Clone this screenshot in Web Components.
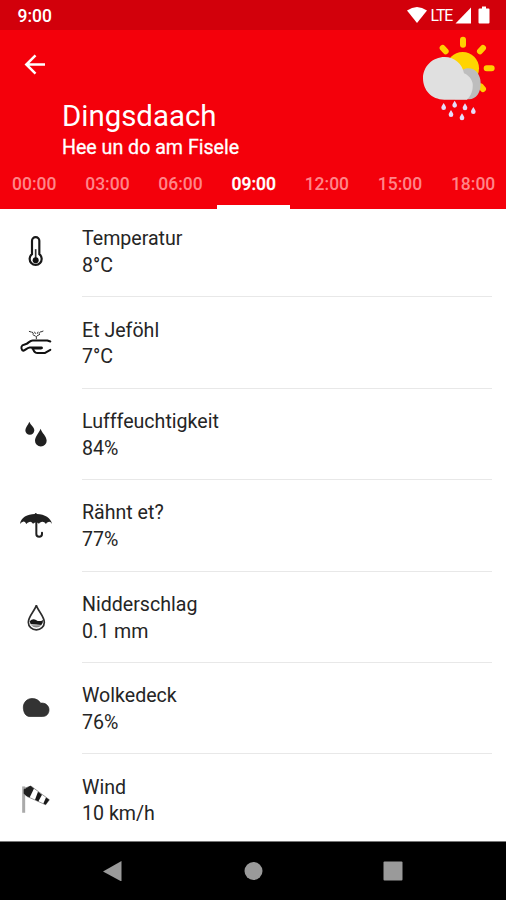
<!DOCTYPE html>
<html lang="ksh">
<head>
<meta charset="utf-8">
<title>Dingsdaach</title>
<style>
  body {
    margin: 0;
    font-family: Roboto, sans-serif;
    background: #fff;
  }
</style>
</head>
<body>
<weather-screen></weather-screen>

<script>
// Icons of the detail rows
const icons = {
  temperature: `<svg viewBox="18 14.5 120 120">
    <path d="M66 84V44a11 11 0 0 1 22 0v40a18 18 0 1 1-22 0z" fill="#fff" stroke="#181818" stroke-width="6.500"/>
    <path d="M77 69v30" stroke="#333" stroke-width="5"/>
    <circle cx="77" cy="102" r="9" fill="#111"/></svg>`,
  feeling: `<svg viewBox="18 23.7 120 120" fill="none" stroke="#111" stroke-width="6" stroke-linecap="round" stroke-linejoin="round">
    <path d="M121 79L112 76H68C60 76 56 83 50 86L37 91C32 95 34 105 40 107C46 106 50 98 59 97H95C97 99 95 100 92 100H67M69 102C73 112 76 114 83 114H104L121 104"/>
    <path d="M79 71v-7M76 63l-7-4M82 62l7-4M70 56l-3-5M88 55l3-5M64 51l-6-2M94 50l5-2M74 51l2 4M84 51l-2 4" stroke="#333" stroke-width="3"/></svg>`,
  humidity: `<svg viewBox="18 27.9 120 120" fill="#202020">
    <path d="M58 51C61 60 73 67 73 77A13.500 13.500 0 0 1 46 77C46 69 54 61 58 51z"/>
    <path d="M92 72C95 84 110 95 110 108A17.500 17.500 0 0 1 75 108C75 96 87 84 92 72z"/></svg>`,
  rain: `<svg viewBox="18 32.1 120 120">
    <path d="M30 86C32 66 53 57 74 56Q77 50 81 56C104 57 123 68 126 86Q121 77 115 80Q109 82 108 86Q102 78 94 80Q88 82 87 85Q78 76 69 85Q64 78 58 80Q52 82 49 86Q45 78 39 79Q34 80 30 86z" fill="#202020"/>
    <path d="M79 76v40a8.500 8.500 0 0 0 17 0v-4" fill="none" stroke="#202020" stroke-width="6" stroke-linecap="round"/></svg>`,
  precipitation: `<svg viewBox="18 21.3 120 120">
    <path d="M79 46C76 60 55 80 55 97a24 23 0 0 0 48 0C103 80 82 60 79 46z" fill="#fff" stroke="#2c2c2c" stroke-width="5"/>
    <path d="M59 94Q68 84 78 90Q88 97 99 90A20 20 0 0 1 94 105Q79 103 62 103z" fill="#181818"/>
    <path d="M63 106Q79 106 95 106Q79 119 63 106z" fill="#888"/></svg>`,
  clouds: `<svg viewBox="18 25.5 120 120">
    <path d="M60 111C46 111 41 98 40 86C39 68 52 57 66 57C79 57 87 63 92 71C106 69 117 78 117 91C117 104 108 111 98 111z" fill="#333" stroke="#222" stroke-width="2"/></svg>`,
  wind: `<svg viewBox="18 29.7 120 120">
    <path d="M41 49v79" stroke="#aaa" stroke-width="9"/>
    <path d="M44 54L63 48L118 89L107 104L51 79L44 70z" fill="#fff" stroke="#666" stroke-width="2"/>
    <path d="M41 58L61 47L72 55L59 82L49 78L41 70z" fill="#202020"/>
    <path d="M84 65L96 74L85 94L75 89zM108 82L118 89L107 104L100 100z" fill="#181818"/></svg>`
};

const details = [
  ['temperature', 'Temperatur', '8°C'],
  ['feeling', 'Et Jeföhl', '7°C'],
  ['humidity', 'Lufffeuchtigkeit', '84%'],
  ['rain', 'Rähnt et?', '77%'],
  ['precipitation', 'Nidderschlag', '0.1 mm'],
  ['clouds', 'Wolkedeck', '76%'],
  ['wind', 'Wind', '10 km/h']
];

// Android status bar
class StatusBar extends HTMLElement {
  constructor() {
    super();
    this.attachShadow({ mode: 'open' });
    this.shadowRoot.innerHTML = `
      <style>
        :host {
          display: flex;
          justify-content: space-between;
          box-sizing: border-box;
          height: 30px;
          padding: 0 16px 0 17.500px;
          background: #d2000b;
          color: #fff;
          font-size: 17.5px;
          line-height: 32px;
          font-weight: 500;
        }
        .signals { display: flex; }
        .lte { width: 22.500px; margin-left: 4px; font-size: 15.8px; font-weight: 400; letter-spacing: -1px; }
        svg { display: block; height: 30px; fill: #fff; }
      </style>
      <span><slot></slot></span>
      <div class="signals">
        <svg width="20" viewBox="0 0 20 30"><path d="M0 10.500Q10 3.500 20 10.500L10 23z"/></svg>
        <span class="lte">LTE</span>
        <svg width="37" viewBox="0 0 37 30">
          <path d="M2.500 23.500L18 7.500V23.500z"/>
          <path d="M29 6.500h4v2h2.500q1 0 1 1v13q0 1-1 1h-9q-1 0-1-1v-13q0-1 1-1H29z"/>
        </svg>
      </div>
    `;
  }
}

// Red header: back arrow, day, place and current weather
class DayHeader extends HTMLElement {
  constructor() {
    super();
    this.attachShadow({ mode: 'open' });
    this.shadowRoot.innerHTML = `
      <style>
        :host {
          display: flex;
          box-sizing: border-box;
          height: 134px;
          background: #f4000b;
          color: #fff;
        }
        .back { width: 62px; padding-top: 22px; }
        .back svg { display: block; margin-left: 23px; }
        .titles { flex: 1; padding-top: 68px; }
        h1 {
          margin: 0;
          font-size: 29.4px;
          line-height: 36px;
          font-weight: 400;
        }
        p { margin: 0; font-size: 19.6px; line-height: 28px; -webkit-text-stroke: 0.3px #fff; }
        .weather { display: block; width: 106px; height: 95px; }
      </style>
      <div class="back">
        <svg width="24" height="24" viewBox="0 0 24 24" fill="none" stroke="#fff" stroke-width="2.5">
          <path d="M22 12.500H4M12.500 3.300L3.300 12.500L12.500 21.700"/>
        </svg>
      </div>
      <div class="titles">
        <h1><slot name="day"></slot></h1>
        <p><slot name="place"></slot></p>
      </div>
      <svg class="weather" viewBox="0 90 318 285">
        <g stroke="#ffd000" stroke-width="18" stroke-linecap="round">
          <path d="M189 119v15M128 144l9 10M249 144l-9 10M260 205h15M242 259l7 8"/>
        </g>
        <circle cx="188" cy="205" r="49" fill="#ffd400"/>
        <path d="M180 220C184 206 205 201 220 208C235 216 243 234 242 253C241 280 229 297 207 298H165z" fill="#bdbdbd"/>
        <path d="M133 299C94 299 69 270 69 235C69 199 98 171 134 171C164 171 187 192 192 220C210 228 221 244 218 262C217 280 209 291 201 299z" fill="#e0e0e0"/>
        <g fill="#e5dcfa">
          <path id="drop" d="M131 309C135 316 138 319 138 323a7 7 0 0 1-14 0C124 319 127 316 131 309z"/>
          <use href="#drop" x="33" y="-7"/>
          <use href="#drop" x="64" y="1"/>
          <use href="#drop" x="89" y="12"/>
          <use href="#drop" x="22" y="21"/>
          <use href="#drop" x="55" y="31"/>
        </g>
      </svg>
    `;
  }
}

// Hour tabs
class HourTabs extends HTMLElement {
  constructor() {
    super();
    this.attachShadow({ mode: 'open' });
    const hours = this.getAttribute('hours').split(' ');
    const active = this.getAttribute('active');
    this.shadowRoot.innerHTML = `
      <style>
        :host {
          display: flex;
          height: 44.7px;
          overflow: hidden;
          background: #f4000b;
        }
        .strip { display: flex; margin-left: -2.3px; }
        .tab {
          flex: 0 0 73.15px;
          box-sizing: border-box;
          height: 44.7px;
          text-align: center;
          font-size: 17.5px;
          line-height: 40px;
          font-weight: 500;
          color: #ff8589;
        }
        .tab.active { color: #fff; border-bottom: 4px solid #fff; -webkit-text-stroke: 0.3px #fff; }
      </style>
      <div class="strip">
        ${hours.map(h => `<div class="tab ${h === active ? 'active' : ''}">${h}</div>`).join('')}
      </div>
    `;
  }
}

// One row with icon, label and value
class DetailRow extends HTMLElement {
  constructor() {
    super();
    this.attachShadow({ mode: 'open' });
    this.shadowRoot.innerHTML = `
      <style>
        :host {
          display: flex;
          align-items: flex-end;
          box-sizing: border-box;
          height: 91.4px;
          padding-right: 14px;
          color: #252525;
        }
        :host(:first-child) { height: 88.8px; }
        .icon { width: 66px; margin-left: 16px; padding-bottom: 26px; }
        svg { display: block; width: 40px; height: 40px; }
        .text {
          flex: 1;
          padding-bottom: 16.8px;
          border-bottom: 1.5px solid #e8e8e8;
          font-size: 19.6px;
          line-height: 26.700px;
        }
        :host(:last-child) .text { border-color: transparent; }
      </style>
      <div class="icon">${icons[this.getAttribute('icon')]}</div>
      <div class="text">
        <div><slot name="label"></slot></div>
        <div><slot name="value"></slot></div>
      </div>
    `;
  }
}

// Android navigation bar
class NavBar extends HTMLElement {
  constructor() {
    super();
    this.attachShadow({ mode: 'open' });
    this.shadowRoot.innerHTML = `
      <style>
        :host {
          display: flex;
          justify-content: space-between;
          box-sizing: border-box;
          height: 59px;
          padding: 18.500px 103px 0 102px;
          background: #000;
          border-top: 1px solid #777;
        }
        svg { width: 20px; height: 20px; fill: #9a9a9a; }
      </style>
      <svg viewBox="0 0 20 20"><path d="M1 10.500L19.500 0V20.500z"/></svg>
      <svg viewBox="0 0 20 20"><circle cx="10.500" cy="10" r="9"/></svg>
      <svg viewBox="0 0 20 20"><rect x="0.500" y="0.500" width="19" height="19" rx="1"/></svg>
    `;
  }
}

// Whole screen
class WeatherScreen extends HTMLElement {
  constructor() {
    super();
    this.attachShadow({ mode: 'open' });
    this.shadowRoot.innerHTML = `
      <style>
        :host {
          display: flex;
          flex-direction: column;
          width: 506px;
          height: 900px;
          overflow: hidden;
          background: #fff;
        }
        status-bar, day-header, hour-tabs, nav-bar { flex-shrink: 0; }
        .list { flex: 1; min-height: 0; overflow: hidden; }
      </style>
      <status-bar>9:00</status-bar>
      <day-header>
        <span slot="day">Dingsdaach</span>
        <span slot="place">Hee un do am Fisele</span>
      </day-header>
      <hour-tabs hours="00:00 03:00 06:00 09:00 12:00 15:00 18:00" active="09:00"></hour-tabs>
      <div class="list">
        ${details.map(([icon, label, value]) => `
          <detail-row icon="${icon}">
            <span slot="label">${label}</span>
            <span slot="value">${value}</span>
          </detail-row>`).join('')}
      </div>
      <nav-bar></nav-bar>
    `;
  }
}

customElements.define('status-bar', StatusBar);
customElements.define('day-header', DayHeader);
customElements.define('hour-tabs', HourTabs);
customElements.define('detail-row', DetailRow);
customElements.define('nav-bar', NavBar);
customElements.define('weather-screen', WeatherScreen);
</script>
</body>
</html>
